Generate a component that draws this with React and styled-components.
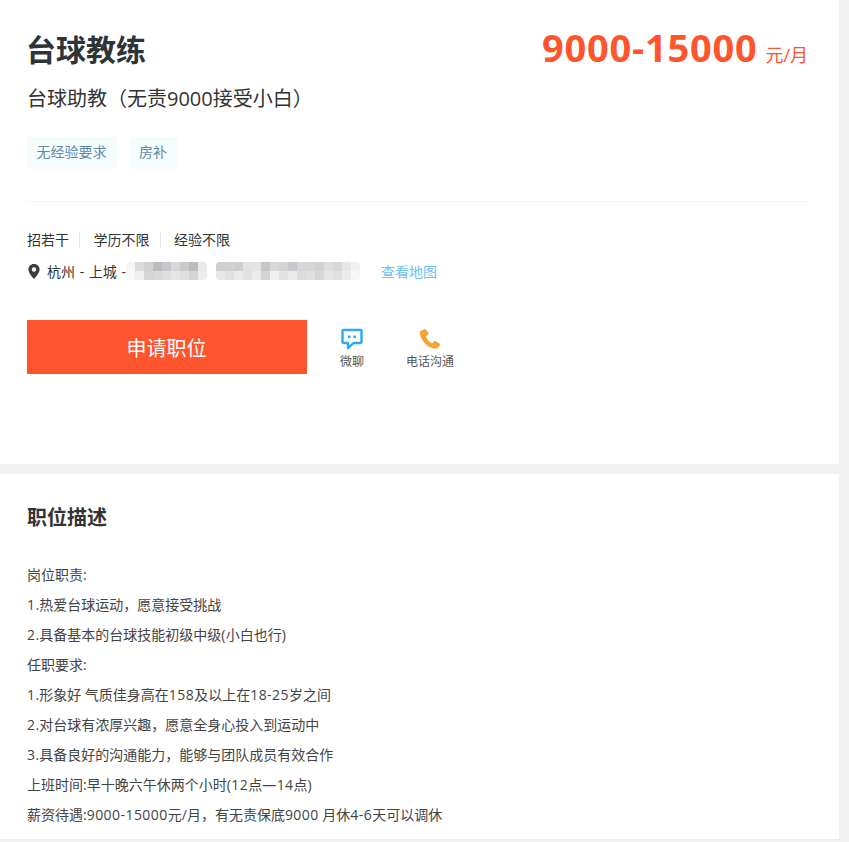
import React from "react";
import styled, { createGlobalStyle } from "styled-components";

const GlobalStyle = createGlobalStyle`
  html, body {
    margin: 0;
    padding: 0;
    height: 842px;
    overflow: hidden;
    background: #f2f2f2;
  }
`;

const requirements = ["招若干", "学历不限", "经验不限"];
const tags = ["无经验要求", "房补"];
const lines = [
  "岗位职责:",
  "1.热爱台球运动，愿意接受挑战",
  "2.具备基本的台球技能初级中级(小白也行)",
  "任职要求:",
  "1.形象好 气质佳身高在158及以上在18-25岁之间",
  "2.对台球有浓厚兴趣，愿意全身心投入到运动中",
  "3.具备良好的沟通能力，能够与团队成员有效合作",
  "上班时间:早十晚六午休两个小时(12点—14点)",
  "薪资待遇:9000-15000元/月，有无责保底9000 月休4-6天可以调休",
];

// mosaic standing in for the blurred street address
const mosaicA = [
  ["#f6f6f6", "#dcdcde", "#d4d2ce", "#bdbdbd", "#c9c5cc", "#d8d8d8", "#cdc9c6", "#bcbcbc", "#eaeaea"],
  ["#f8f8f8", "#eeeeec", "#d4d4d4", "#d8d8d8", "#e0dce0", "#e2e6e6", "#e2deda", "#d4d4d6", "#eceeee"],
];
const mosaicB = [
  ["#cfcfcf", "#d2d2d2", "#cdcdd2", "#e4e2e2", "#e4e4e4", "#c8c6c8", "#d8d8d8", "#d2d4d6", "#c8c6cc", "#d6d6d6", "#d6d6da", "#d2d2d2", "#dededc", "#d6d8da", "#e6e6e6", "#f2f2f2"],
  ["#e6e8e8", "#e0e0e0", "#eaeaea", "#e2e2e0", "#ebebeb", "#d4d2d6", "#f0f0f0", "#e2e2de", "#ececf0", "#dcdcdc", "#e0e0e0", "#d6d6d4", "#e4e6e6", "#e0e0e0", "#ececec", "#f6f6f6"],
];

function Mosaic({ rows }) {
  return (
    <MosaicGrid $columns={rows[0].length}>
      {rows.flat().map((color, i) => (
        <MosaicCell key={i} $color={color} />
      ))}
    </MosaicGrid>
  );
}

function PinIcon() {
  return (
    <PinSvg width="12" height="15" viewBox="0 0 12 15">
      <path
        fillRule="evenodd"
        fill="#3a3d42"
        d="M6 0C2.600 0 .4 2.400.4 5.500.4 9 4.500 13.400 6 15c1.500-1.600 5.600-6 5.600-9.500C11.600 2.400 9.400 0 6 0Zm0 3.300a2.200 2.200 0 1 1 0 4.400 2.200 2.200 0 0 1 0-4.400Z"
      />
    </PinSvg>
  );
}

function ChatIcon() {
  return (
    <svg width="22" height="22" viewBox="0 0 22 22">
      <path
        fill="none"
        stroke="#2fa9f0"
        strokeWidth="2.400"
        strokeLinejoin="round"
        d="M3 2h16a1.500 1.500 0 0 1 1.500 1.500v10a1.500 1.500 0 0 1-1.500 1.500h-6.500L7 20.200V15H3a1.500 1.500 0 0 1-1.500-1.500v-10A1.500 1.500 0 0 1 3 2Z"
      />
      <rect x="7" y="7.500" width="2.600" height="2.600" fill="#2fa9f0" />
      <rect x="12.400" y="7.500" width="2.600" height="2.600" fill="#2fa9f0" />
    </svg>
  );
}

function PhoneIcon() {
  return (
    <svg width="22" height="22" viewBox="0 0 22 20">
      <path
        fill="#f2a533"
        d="M5.200.3 1.600 2C.6 2.600.7 4 1 5.400c1.100 4.800 6.300 12.300 13 13.900 1.700.4 3.600.4 4.800-.6l2-2.500c.5-.6.3-1.200-.3-1.600l-3.700-2.400c-.6-.4-1.200-.3-1.700.2l-1.500 1.500c-.4.4-.9.400-1.400.1-2.300-1.300-4-3.600-5-6-.2-.5-.1-1 .4-1.300l1.400-1C9.600 5 9.700 4.400 9.400 3.800L7 .7C6.500.1 5.900 0 5.200.3Z"
      />
    </svg>
  );
}

// digits and dashes run a little wider in the reference than in Open Sans
function DescriptionLine({ text }) {
  return (
    <Line>
      {text.split(/([\d\-—()]+)/).map((part, i) =>
        i % 2 ? <Figures key={i}>{part}</Figures> : part
      )}
    </Line>
  );
}

export default function App() {
  return (
    <>
      <GlobalStyle />
      <Page>
        <HeaderCard>
          <TitleRow>
            <Title>台球教练</Title>
            <Salary>
              <SalaryAmount>9000-15000</SalaryAmount>
              <SalaryUnit>元/月</SalaryUnit>
            </Salary>
          </TitleRow>
          <Subtitle>台球助教（无责9000接受小白）</Subtitle>
          <TagRow>
            {tags.map((tag) => (
              <Tag key={tag}>{tag}</Tag>
            ))}
          </TagRow>
          <Divider />
          <RequirementRow>
            {requirements.map((item) => (
              <Requirement key={item}>{item}</Requirement>
            ))}
          </RequirementRow>
          <AddressRow>
            <PinIcon />
            <AddressText>杭州 - 上城 -</AddressText>
            <BlurredAddress>
              <Mosaic rows={mosaicA} />
              <Mosaic rows={mosaicB} />
            </BlurredAddress>
            <MapLink>查看地图</MapLink>
          </AddressRow>
          <ActionRow>
            <ApplyButton>申请职位</ApplyButton>
            <ContactItem $width={90}>
              <ChatIcon />
              <ContactLabel>微聊</ContactLabel>
            </ContactItem>
            <ContactItem $width={66}>
              <PhoneIcon />
              <ContactLabel>电话沟通</ContactLabel>
            </ContactItem>
          </ActionRow>
        </HeaderCard>
        <DescriptionCard>
          <SectionTitle>职位描述</SectionTitle>
          <Description>
            {lines.map((line) => (
              <DescriptionLine key={line} text={line} />
            ))}
          </Description>
        </DescriptionCard>
      </Page>
    </>
  );
}

const Page = styled.div`
  width: 839px;
  display: flex;
  flex-direction: column;
  gap: 10px;
  font-family: "Open Sans", "Noto Sans CJK SC", sans-serif;
  color: #333;
`;

const HeaderCard = styled.section`
  height: 464px;
  box-sizing: border-box;
  padding: 27px 31px 0 27px;
  background: #fff;
`;

const TitleRow = styled.div`
  display: flex;
  justify-content: space-between;
  align-items: flex-start;
  height: 46px;
`;

const Title = styled.h1`
  margin: 0 0 0 -1px;
  font-size: 30px;
  line-height: 46px;
  font-weight: 700;
  color: #2f3437;
`;

const Salary = styled.div`
  line-height: 40px;
  color: #ff552e;
`;

const SalaryAmount = styled.span`
  font-size: 38px;
  font-weight: 700;
  letter-spacing: 0.75px;
`;

const SalaryUnit = styled.span`
  margin-left: 8px;
  font-size: 18px;
  font-weight: 400;
`;

const Subtitle = styled.div`
  margin-top: 12px;
  font-size: 20px;
  line-height: 28px;
  color: #333;
`;

const TagRow = styled.div`
  display: flex;
  gap: 13px;
  margin-top: 24px;
`;

const Tag = styled.span`
  height: 32px;
  padding: 0 10px 0 9.500px;
  font-size: 14px;
  line-height: 30px;
  color: #5f8aa6;
  background: #f6fbfe;
`;

const Divider = styled.div`
  height: 1px;
  margin-top: 32px;
  background: #f6f6f6;
`;

const RequirementRow = styled.div`
  display: flex;
  margin-top: 30px;
`;

const Requirement = styled.span`
  height: 16px;
  padding-right: 10px;
  margin-right: 13.500px;
  font-size: 14px;
  line-height: 16px;
  color: #333;
  border-right: 1px solid #e8e8e8;

  &:last-child {
    border-right: 0;
  }
`;

const AddressRow = styled.div`
  display: flex;
  align-items: center;
  height: 20px;
  margin-top: 13px;
`;

const PinSvg = styled.svg`
  margin-left: 1px;
`;

const AddressText = styled.span`
  margin-left: 7px;
  font-size: 14px;
  word-spacing: 1px;
  color: #333;
`;

const BlurredAddress = styled.div`
  display: flex;
  gap: 9px;
`;

const MosaicGrid = styled.div`
  display: grid;
  grid-template-columns: repeat(${(p) => p.$columns}, 9px);
  grid-auto-rows: 9px;
  border-radius: 4px;
  overflow: hidden;
`;

const MosaicCell = styled.span`
  background: ${(p) => p.$color};
`;

const MapLink = styled.a`
  margin-left: 21px;
  font-size: 14px;
  color: #6cc0f2;
`;

const ActionRow = styled.div`
  display: flex;
  align-items: flex-start;
  margin-top: 39px;
`;

const ApplyButton = styled.button`
  width: 280px;
  height: 54px;
  padding: 3px 1px 0 0;
  border: 0;
  font-family: inherit;
  font-size: 20px;
  line-height: 51px;
  color: #fff;
  background: #ff552e;
`;

const ContactItem = styled.div`
  display: flex;
  flex-direction: column;
  align-items: center;
  gap: 4px;
  width: ${(p) => p.$width}px;
  padding-top: 8px;
`;

const ContactLabel = styled.span`
  font-size: 12px;
  line-height: 16px;
  color: #555;
  white-space: nowrap;
`;

const DescriptionCard = styled.section`
  height: 366px;
  box-sizing: border-box;
  padding: 30px 31px 0 27px;
  background: #fff;
  border-bottom: 1px solid #eee;
`;

const SectionTitle = styled.h2`
  margin: 0;
  font-size: 20px;
  line-height: 28px;
  font-weight: 700;
  color: #333;
`;

const Description = styled.div`
  margin-top: 28px;
`;

const Line = styled.div`
  font-size: 14px;
  line-height: 30px;
  color: #444;
`;

const Figures = styled.span`
  letter-spacing: 0.45px;
`;
